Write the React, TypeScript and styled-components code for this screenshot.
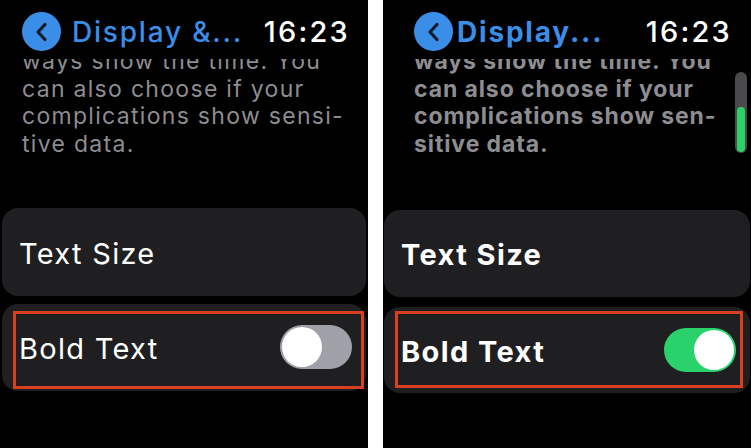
import React from "react";
import styled, { createGlobalStyle } from "styled-components";

const GlobalStyle = createGlobalStyle`
  html, body {
    margin: 0;
    padding: 0;
    background: #ffffff;
  }
  body {
    font-family: Inter, "Noto Sans", "Liberation Sans", sans-serif;
  }
`;

const Page = styled.div`
  display: flex;
  width: 751px;
  height: 448px;
  background: #ffffff;
`;

const Divider = styled.div`
  width: 15px;
  flex: 0 0 15px;
`;

const Screen = styled.div`
  position: relative;
  width: 368px;
  flex: 0 0 368px;
  height: 448px;
  background: #000;
  overflow: hidden;
`;

const Header = styled.div<{ $inset: number; $bold: boolean }>`
  position: relative;
  z-index: 1;
  display: flex;
  align-items: center;
  justify-content: space-between;
  height: 59px;
  padding: 0 ${(p) => (p.$bold ? 19 : 18)}px 0 ${(p) => p.$inset}px;
  background: #000;
  box-sizing: border-box;
`;

const BackLink = styled.div<{ $bold: boolean }>`
  display: flex;
  align-items: center;
  gap: ${(p) => (p.$bold ? 4 : 11)}px;
  color: #3b8ee8;
  font-size: 28px;
  font-weight: ${(p) => (p.$bold ? 700 : 500)};
  letter-spacing: 1.8px;
  margin-top: 4px;
`;

const BackCircle = styled.div`
  width: 39px;
  height: 39px;
  border-radius: 50%;
  background: #3b8ee8;
  display: flex;
  align-items: center;
  justify-content: center;
  flex: 0 0 39px;
`;

const Clock = styled.div`
  color: #fff;
  font-size: 29px;
  font-weight: 500;
  letter-spacing: 2.2px;
  margin-top: 4px;
`;

const Description = styled.div<{ $inset: number; $bold: boolean }>`
  margin-top: -11px;
  padding-left: ${(p) => p.$inset}px;
  color: #8d8d92;
  font-size: 23px;
  line-height: 27.7px;
  font-weight: ${(p) => (p.$bold ? 700 : 400)};
  letter-spacing: ${(p) => (p.$bold ? "0.9px" : "1.3px")};
  white-space: nowrap;
`;

const Line = styled.div``;

const ScrollIndicator = styled.div`
  position: absolute;
  top: 72px;
  right: 4px;
  width: 12px;
  height: 81px;
  border-radius: 6px;
  background: #4a4a4c;
  overflow: hidden;
  display: flex;
  flex-direction: column;
  justify-content: flex-end;
`;

const ScrollThumb = styled.div`
  height: 45px;
  margin: 0 2px 1px;
  border-radius: 5px;
  background: #2bd06b;
`;

const CardList = styled.div<{ $side: number; $top: number }>`
  display: flex;
  flex-direction: column;
  gap: ${(p) => (p.$side > 1 ? 8 : 10)}px;
  margin-top: ${(p) => p.$top}px;
  padding: 0 ${(p) => p.$side}px;
`;

const Card = styled.div<{ $height: number }>`
  position: relative;
  display: flex;
  align-items: center;
  justify-content: space-between;
  height: ${(p) => p.$height}px;
  padding: 0 14px 0 17px;
  border-radius: 16px;
  background: #1f1f21;
`;

const CardTitle = styled.div<{ $bold: boolean }>`
  color: #fff;
  font-size: 29px;
  font-weight: ${(p) => (p.$bold ? 700 : 400)};
  letter-spacing: ${(p) => (p.$bold ? "1.4px" : "1.3px")};
  margin-top: 3px;
`;

const Highlight = styled.div<{ $l: number; $t: number; $r: number; $b: number }>`
  position: absolute;
  left: ${(p) => p.$l}px;
  top: ${(p) => p.$t}px;
  right: ${(p) => p.$r}px;
  bottom: ${(p) => p.$b}px;
  border: 3px solid #d8401f;
  pointer-events: none;
`;

const Toggle = styled.div<{ $on: boolean }>`
  display: flex;
  justify-content: ${(p) => (p.$on ? "flex-end" : "flex-start")};
  align-items: center;
  width: 72px;
  height: 44px;
  padding: 2px;
  box-sizing: border-box;
  border-radius: 22px;
  background: ${(p) => (p.$on ? "#2ad26b" : "#9ea1a8")};
`;

const Knob = styled.div`
  width: 40px;
  height: 40px;
  border-radius: 50%;
  background: #fff;
`;

const Chevron = () => (
  <svg width="14" height="20" viewBox="0 0 14 20">
    <path
      d="M10 2.5 L3 10 L10 17.5"
      fill="none"
      stroke="#0b1a2e"
      strokeWidth="3.2"
      strokeLinecap="round"
      strokeLinejoin="round"
    />
  </svg>
);

interface WatchScreenProps {
  bold: boolean;
  title: string;
  lines: string[];
}

const WatchScreen = ({ bold, title, lines }: WatchScreenProps) => {
  const inset = bold ? 31 : 22;
  return (
    <Screen>
      <Header $inset={inset} $bold={bold}>
        <BackLink $bold={bold}>
          <BackCircle>
            <Chevron />
          </BackCircle>
          {title}
        </BackLink>
        <Clock>16:23</Clock>
      </Header>
      <Description $inset={inset} $bold={bold}>
        {lines.map((line) => (
          <Line key={line}>{line}</Line>
        ))}
      </Description>
      {bold && (
        <ScrollIndicator>
          <ScrollThumb />
        </ScrollIndicator>
      )}
      <CardList $side={bold ? 1 : 2} $top={bold ? 51 : 49}>
        <Card $height={bold ? 87 : 88}>
          <CardTitle $bold={bold}>Text Size</CardTitle>
        </Card>
        <Card $height={bold ? 86 : 87}>
          <CardTitle $bold={bold}>Bold Text</CardTitle>
          <Toggle $on={bold}>
            <Knob />
          </Toggle>
          {bold ? (
            <Highlight $l={11} $t={4} $r={7} $b={5} />
          ) : (
            <Highlight $l={11} $t={7} $r={2} $b={2} />
          )}
        </Card>
      </CardList>
    </Screen>
  );
};

export default function App() {
  return (
    <>
      <GlobalStyle />
      <Page>
        <WatchScreen
          bold={false}
          title="Display &..."
          lines={[
            "ways show the time. You",
            "can also choose if your",
            "complications show sensi-",
            "tive data.",
          ]}
        />
        <Divider />
        <WatchScreen
          bold
          title="Display..."
          lines={[
            "ways show the time. You",
            "can also choose if your",
            "complications show sen-",
            "sitive data.",
          ]}
        />
      </Page>
    </>
  );
}
